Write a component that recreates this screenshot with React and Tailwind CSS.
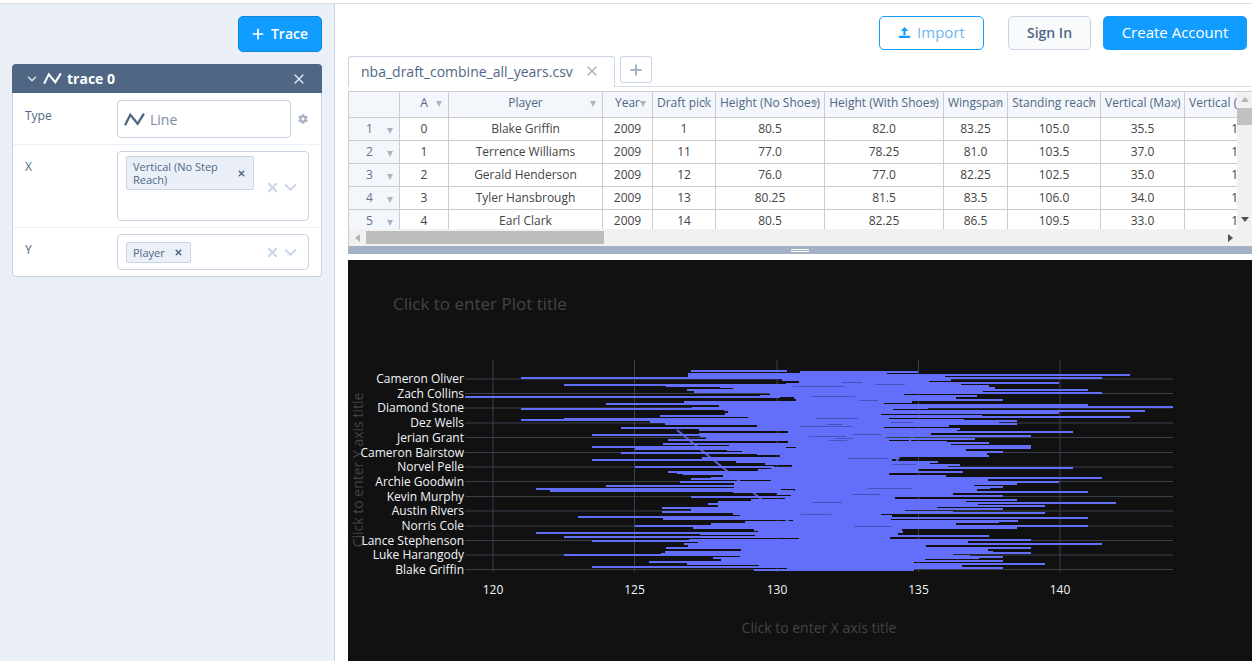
import { Plus, X, ChevronDown } from 'lucide-react';
import { FaCog } from 'react-icons/fa';

const columns = [
  { label: 'A', width: 49 },
  { label: 'Player', width: 154 },
  { label: 'Year', width: 50 },
  { label: 'Draft pick', width: 63 },
  { label: 'Height (No Shoes)', width: 109 },
  { label: 'Height (With Shoes)', width: 119 },
  { label: 'Wingspan', width: 64 },
  { label: 'Standing reach', width: 93 },
  { label: 'Vertical (Max)', width: 84 },
  { label: 'Vertical (No Step Reach)', width: 124 },
];

const rows = [
  ['0', 'Blake Griffin', '2009', '1', '80.5', '82.0', '83.25', '105.0', '35.5', '127.5'],
  ['1', 'Terrence Williams', '2009', '11', '77.0', '78.25', '81.0', '103.5', '37.0', '131.0'],
  ['2', 'Gerald Henderson', '2009', '12', '76.0', '77.0', '82.25', '102.5', '35.0', '129.5'],
  ['3', 'Tyler Hansbrough', '2009', '13', '80.25', '81.5', '83.5', '106.0', '34.0', '130.0'],
  ['4', 'Earl Clark', '2009', '14', '80.5', '82.25', '86.5', '109.5', '33.0', '134.5'],
];

const playerTicks = [
  ['Cameron Oliver', 379], ['Zach Collins', 393.5], ['Diamond Stone', 408], ['Dez Wells', 423],
  ['Jerian Grant', 437.5], ['Cameron Bairstow', 452.5], ['Norvel Pelle', 467], ['Archie Goodwin', 481.5],
  ['Kevin Murphy', 496.5], ['Austin Rivers', 511], ['Norris Cole', 526], ['Lance Stephenson', 540.5],
  ['Luke Harangody', 555], ['Blake Griffin', 569.5],
];

const xTicks = [[120, 493], [125, 634.5], [130, 777], [135, 918.5], [140, 1060]];

// left and right tips of the line, read off the reference as [y, x]
const leftTips = [
  [371, 691], [378.3, 521], [385, 564], [386.7, 720], [396.7, 465], [396.7, 706], [404, 606], [409.3, 521],
  [416.7, 748], [420.3, 521], [419, 564], [421.7, 650], [428.3, 621], [435, 592], [440, 706], [443.7, 663],
  [447.3, 592], [449.3, 635], [453.3, 621], [460, 592], [466.7, 635], [473.3, 677], [479.3, 691], [485.7, 606],
  [489.3, 536], [491.3, 550], [497.3, 691], [505.7, 735], [509.7, 691], [516.7, 578], [519.3, 663], [526, 635],
  [527.7, 706], [532.7, 536], [537.3, 564], [541, 592], [545, 691], [555.3, 564], [561.7, 649], [566.7, 592],
];
const rightTips = [
  [372.3, 918], [375, 1130], [378, 1102], [382.7, 1059], [385.7, 989], [389.7, 1088], [392.7, 1102], [396.7, 946],
  [400, 1003], [405, 1088], [407.3, 1173], [411, 1145], [413.3, 1059], [417.3, 1130], [420.7, 1017], [424.3, 1017],
  [429, 960], [431.7, 1073], [436, 1031], [439.3, 975], [443.3, 989], [445.7, 1031], [448, 1031], [452.3, 1003],
  [455.7, 989], [465, 960], [467.7, 1073], [475.7, 946], [477.7, 1102], [481.7, 1059], [484, 1017], [487.3, 1003],
  [492.3, 1088], [495.7, 1003], [500.3, 1017], [503, 1116], [505.7, 1045], [509, 1003], [513, 1045], [518.3, 1088],
  [520.7, 1018], [526, 1088], [527.7, 1017], [536, 989], [540, 1031], [543.7, 1102], [548.3, 1031], [553.3, 1031],
  [557.3, 1003], [560.7, 1003], [564.3, 1045], [568.3, 1003],
];

// small seeded generator so the core of the chart stays the same on every load
const makeCore = () => {
  let seed = 17;
  const rand = () => {
    seed = (seed * 16807) % 2147483647;
    return seed / 2147483647;
  };
  const core = [];
  const slivers = [];
  for (let y = 372; y < 571; y += 2) {
    core.push({ y, x1: 800 - rand() * 140, x2: 880 + rand() * 120 });
    if (rand() < 0.18) {
      const x1 = 785 + rand() * 110;
      slivers.push({ y, x1, x2: x1 + 15 + rand() * 40 });
    }
  }
  return { core, slivers, rand };
};

const { core, slivers, rand } = makeCore();
const leftSegments = leftTips.map(([y, x]) => ({ y: Math.round(y), x1: x, x2: 770 + rand() * 40 }));
const rightSegments = rightTips.map(([y, x]) => ({ y: Math.round(y), x1: 850 + rand() * 40, x2: x }));
const segments = [...core, ...leftSegments, ...rightSegments];

const TraceLineIcon = ({ className }) => (
  <svg viewBox="0 0 20 14" className={className} fill="none" stroke="currentColor" strokeWidth="2.2">
    <path d="M1 12.5 L6 2.5 L13 11 L19 1.5" />
  </svg>
);

const HeaderArrow = ({ className }) => (
  <span className={`absolute w-0 h-0 border-l-[3.5px] border-r-[3.5px] border-t-[6px] border-l-transparent border-r-transparent border-t-[#a9b4c2] ${className}`} />
);

const Chip = ({ children, className }) => (
  <div className={`flex items-center justify-between bg-[#ebf0f8] border border-[#c8d4e3] rounded-[2px] text-[11px] leading-[13px] text-[#506784] ${className}`}>
    {children}
  </div>
);

const SelectControls = () => (
  <div className="flex items-center gap-[1px] text-[#c8d4e3]">
    <X size={15} strokeWidth={3} />
    <ChevronDown size={19} strokeWidth={2.5} />
  </div>
);

const Sidebar = () => (
  <aside className="w-[335px] shrink-0 bg-[#ebf0f8] border-r border-[#c8d4e3] pt-[12px] pl-[12px] pr-[12px]">
    <div className="flex justify-end">
      <button className="h-[36px] w-[84px] pr-[2px] pb-[1px] bg-[#119dff] border border-[#0d89df] rounded-[5px] text-white text-[14px] font-semibold flex items-center justify-center gap-[5px]">
        <Plus size={16} strokeWidth={2.5} />
        Trace
      </button>
    </div>
    <div className="mt-[12px] w-[310px]">
      <div className="h-[29px] bg-[#506784] rounded-t-[4px] flex items-center pl-[13px] pr-[15px] text-white">
        <ChevronDown size={14} strokeWidth={2.5} className="text-[#dfe8f3]" />
        <TraceLineIcon className="w-[19px] h-[13px] ml-[4px]" />
        <span className="ml-[5px] text-[14px] font-bold">trace 0</span>
        <X size={16} className="ml-auto text-[#dfe8f3]" />
      </div>
      <div className="bg-white border border-t-0 border-[#c8d4e3] rounded-b-[4px] text-[12px] text-[#506784]">
        <div className="h-[52px] flex border-b border-[#ebf0f8] pt-[7px] pl-[12px]">
          <div className="w-[92px] pt-[7px]">Type</div>
          <div className="w-[174px] h-[38px] border border-[#c8d4e3] rounded-[4px] flex items-center pl-[6px] text-[#7c8ca3] text-[14px]">
            <TraceLineIcon className="w-[21px] h-[15px] text-[#506784] mr-[5px]" />
            Line
          </div>
          <FaCog size={10} className="text-[#a2b1c6] ml-[7px] mt-[14px]" />
        </div>
        <div className="h-[83px] flex border-b border-[#ebf0f8] pt-[6px] pl-[12px]">
          <div className="w-[92px] pt-[7px]">X</div>
          <div className="w-[192px] h-[70px] border border-[#c8d4e3] rounded-[4px] flex pl-[8px] pt-[4px] pr-[8px]">
            <Chip className="w-[128px] h-[34px] pl-[6px] pr-[7px]">
              <span>Vertical (No Step Reach)</span>
              <X size={9} strokeWidth={4} className="shrink-0 ml-[10px]" />
            </Chip>
            <div className="ml-auto mt-[22px]">
              <SelectControls />
            </div>
          </div>
        </div>
        <div className="h-[48px] flex pt-[6px] pl-[12px]">
          <div className="w-[92px] pt-[7px]">Y</div>
          <div className="w-[192px] h-[36px] border border-[#c8d4e3] rounded-[4px] flex items-center pl-[8px] pr-[8px]">
            <Chip className="w-[65px] h-[21px] pl-[6px] pr-[7px]">
              <span>Player</span>
              <X size={9} strokeWidth={4} className="shrink-0" />
            </Chip>
            <div className="ml-auto">
              <SelectControls />
            </div>
          </div>
        </div>
      </div>
    </div>
  </aside>
);

const TopBar = () => (
  <div className="h-[52px] flex justify-end items-start pt-[12px] pr-[5px] text-[15px]">
    <button className="w-[105px] h-[34px] pb-[1px] border border-[#119dff] rounded-[5px] text-[#6fb6ee] flex items-center justify-center gap-[6px]">
      <svg viewBox="0 0 14 14" className="w-[13px] h-[13px] text-[#119dff]" fill="currentColor">
        <path d="M7 1 L11 5.5 L8.2 5.5 L8.2 10 L5.8 10 L5.8 5.5 L3 5.5 Z" />
        <rect x="1" y="10.5" width="12" height="2.5" rx="0.5" />
      </svg>
      Import
    </button>
    <button className="w-[83px] h-[34px] pb-[1px] ml-[24px] border border-[#c8d4e3] bg-[#f8fafc] rounded-[5px] text-[#506784] text-[14px] font-semibold">
      Sign In
    </button>
    <button className="w-[144px] h-[34px] pb-[1px] ml-[12px] bg-[#119dff] rounded-[5px] text-white font-medium">
      Create Account
    </button>
  </div>
);

const Tabs = () => (
  <div className="h-[31px] flex items-start border-b border-[#d8dde4]">
    <div className="w-[267px] h-[31px] pb-[2px] bg-white border border-b-0 border-[#c8d4e3] rounded-t-[4px] flex items-center pl-[12px] pr-[14px] text-[14px] text-[#506784]">
      nba_draft_combine_all_years.csv
      <X size={16} className="ml-auto text-[#a2b1c6]" />
    </div>
    <div className="w-[32px] h-[27px] ml-[5px] border border-[#c8d4e3] rounded-[3px] flex items-center justify-center text-[#a2b1c6]">
      <Plus size={16} strokeWidth={3} />
    </div>
  </div>
);

const DataTable = () => (
  <div className="mt-[4px] border-l border-t border-[#ccc]">
    <div className="flex h-[137px]">
      <div className="w-[888px] overflow-hidden">
        <table className="table-fixed w-[960px] border-separate border-spacing-0 text-[12px]">
          <colgroup>
            <col className="w-[51px]" />
            {columns.map((col) => (
              <col key={col.label} style={{ width: col.width }} />
            ))}
          </colgroup>
          <thead>
            <tr className="h-[26px] text-[#506784]">
              <th className="bg-[#f3f6fa] border-r border-b border-[#ccc] font-normal" />
              {columns.map((col) => (
                <th key={col.label} className="relative bg-[#f3f6fa] border-r border-b border-[#ccc] font-normal px-[4px] pb-[3px] overflow-hidden whitespace-nowrap text-center">
                  {col.label}
                  <HeaderArrow className="right-[6px] top-[9px]" />
                </th>
              ))}
            </tr>
          </thead>
          <tbody>
            {rows.map((row, i) => (
              <tr key={row[0]} className="h-[23px]">
                <td className="relative bg-[#f3f6fa] border-r border-b border-[#ccc] text-[#69738a] pl-[17px]">
                  {i + 1}
                  <HeaderArrow className="right-[6px] top-[10px]" />
                </td>
                {row.map((cell, j) => (
                  <td key={j} className="bg-white border-r border-b border-[#ccc] text-center text-[#444] overflow-hidden whitespace-nowrap">
                    {cell}
                  </td>
                ))}
              </tr>
            ))}
          </tbody>
        </table>
      </div>
      <div className="w-[15px] ml-auto bg-[#f1f1f1] flex flex-col items-center pt-[5px]">
        <div className="w-0 h-0 border-l-[4px] border-r-[4px] border-b-[5px] border-l-transparent border-r-transparent border-b-[#b5b5b5]" />
        <div className="w-full h-[17px] mt-[6px] bg-[#c1c1c1]" />
        <div className="mt-auto mb-[7px] w-0 h-0 border-l-[4px] border-r-[4px] border-t-[5px] border-l-transparent border-r-transparent border-t-[#505050]" />
      </div>
    </div>
    <div className="h-[17px] bg-[#f1f1f1] flex items-center">
      <div className="w-[17px] flex justify-center">
        <div className="w-0 h-0 border-t-[4px] border-b-[4px] border-r-[5px] border-t-transparent border-b-transparent border-r-[#b5b5b5]" />
      </div>
      <div className="w-[238px] h-[13px] bg-[#bdbdbd]" />
      <div className="w-0 h-0 ml-[624px] border-t-[4px] border-b-[4px] border-l-[5px] border-t-transparent border-b-transparent border-l-[#505050]" />
    </div>
  </div>
);

const Divider = () => (
  <div className="h-[8px] bg-[#a2b1c6] flex flex-col items-center justify-center gap-[1px]">
    <div className="w-[18px] h-[1px] bg-white" />
    <div className="w-[18px] h-[1px] bg-white" />
  </div>
);

const Chart = () => (
  <div className="mt-[6px] h-[401px] bg-[#111111]">
    <svg width="904" height="401" viewBox="348 260 904 401" className="block">
      <text x="393" y="310" fontSize="17" fill="#444444">Click to enter Plot title</text>
      <text x="819" y="633" fontSize="14" fill="#444444" textAnchor="middle">Click to enter X axis title</text>
      <text x="363" y="470" fontSize="14" fill="#444444" textAnchor="middle" transform="rotate(-90 363 470)">
        Click to enter Y axis title
      </text>

      {xTicks.map(([label, x]) => (
        <g key={label}>
          <line x1={x} x2={x} y1="360" y2="572" stroke="#3a404c" />
          <text x={x} y="594" fontSize="12" fill="#f2f5fa" textAnchor="middle">{label}</text>
        </g>
      ))}
      {playerTicks.map(([name, y]) => (
        <g key={name}>
          <line x1="465" x2="1173" y1={y} y2={y} stroke="#3a404c" />
          <text x="464" y={y + 4} fontSize="12" fill="#f2f5fa" textAnchor="end">{name}</text>
        </g>
      ))}

      <path d="M677 430 L823 550 L838 550 L915 433" fill="none" stroke="#5a63e0" strokeWidth="2" />
      <g stroke="#636efa" strokeWidth="2" shapeRendering="crispEdges">
        {segments.map((s, i) => (
          <line key={i} x1={s.x1} x2={s.x2} y1={s.y} y2={s.y} />
        ))}
      </g>
      <g stroke="#4a52b8" strokeWidth="1" shapeRendering="crispEdges">
        {slivers.map((s, i) => (
          <line key={i} x1={s.x1} x2={s.x2} y1={s.y + 0.5} y2={s.y + 0.5} />
        ))}
      </g>
    </svg>
  </div>
);

export default function App() {
  return (
    <div className="h-[661px] w-[1252px] overflow-hidden bg-white font-['Open_Sans',sans-serif]">
      <div className="h-[4px] border-b border-[#dcdfe4]" />
      <div className="flex h-[657px]">
        <Sidebar />
        <main className="flex-1 min-w-0 pl-[13px] flex flex-col">
          <TopBar />
          <Tabs />
          <DataTable />
          <Divider />
          <Chart />
        </main>
      </div>
    </div>
  );
}
